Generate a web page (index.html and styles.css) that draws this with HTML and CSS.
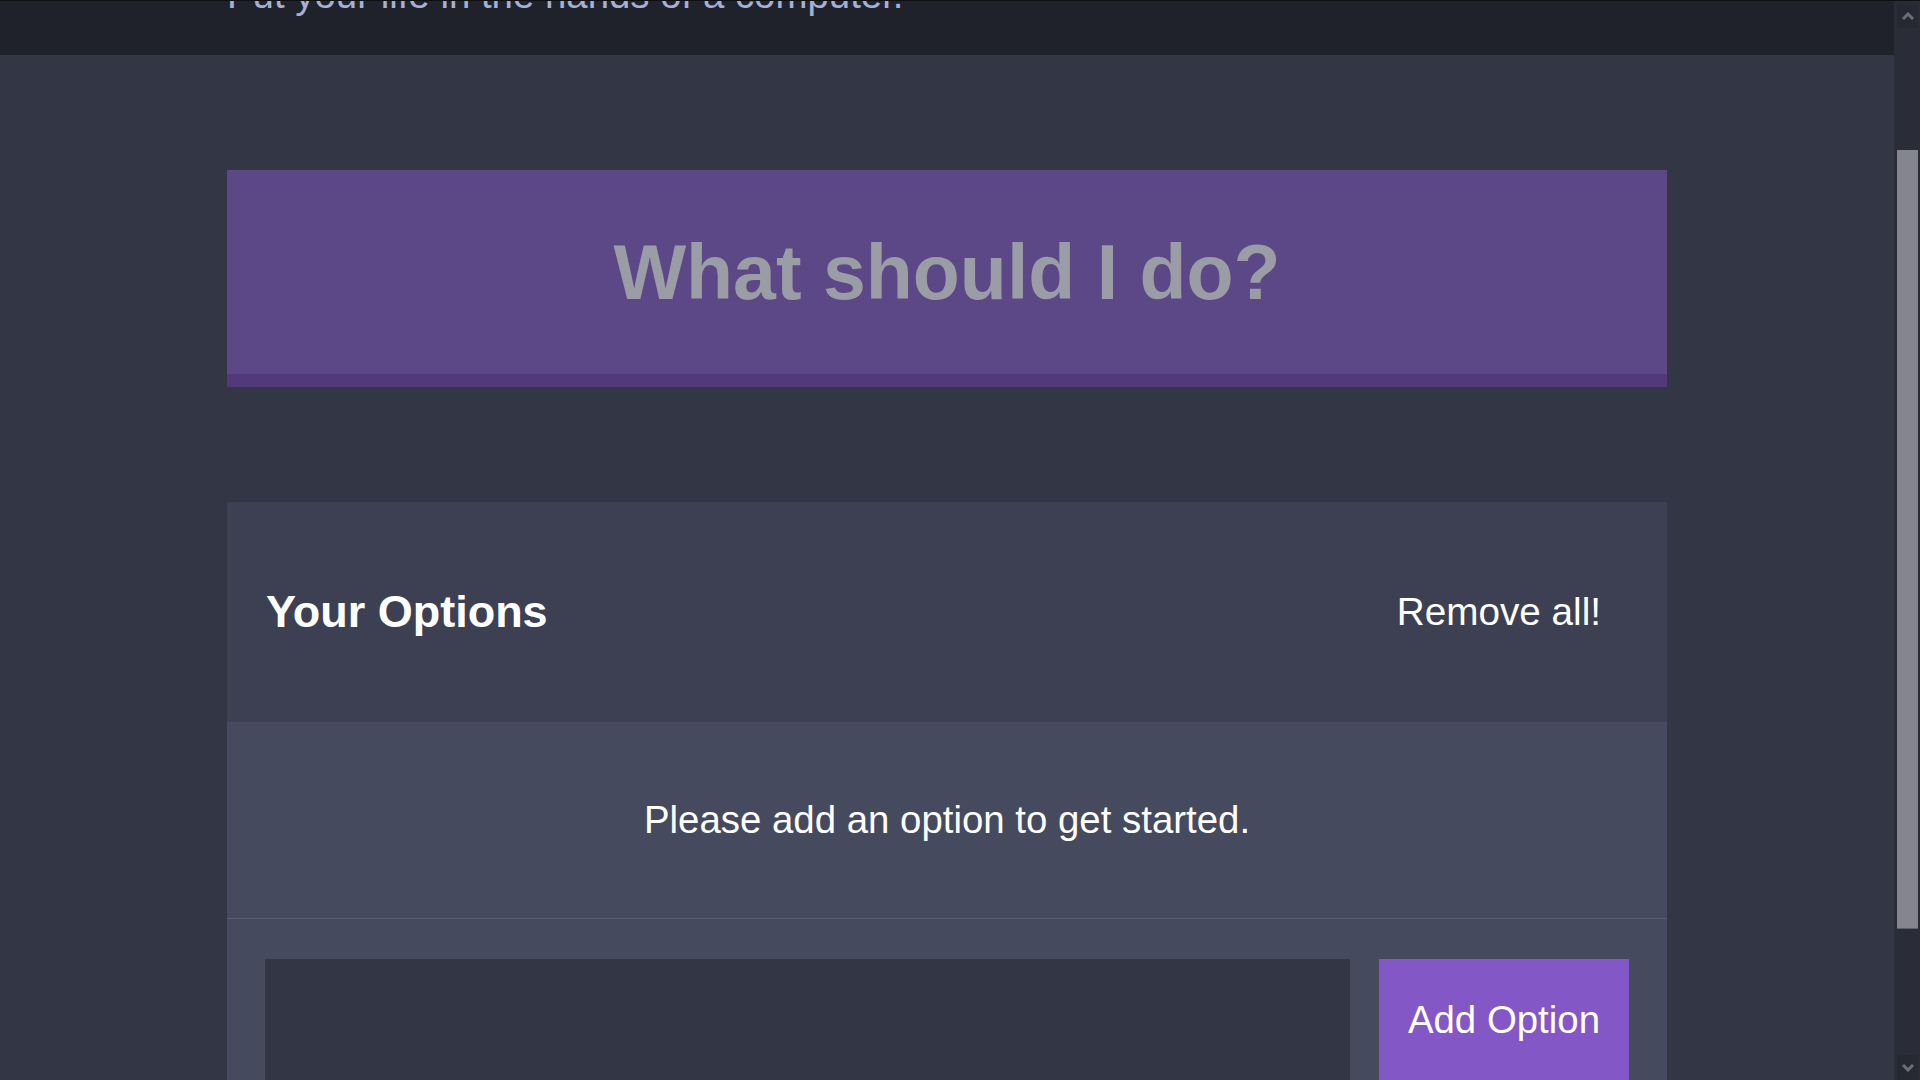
FILE: index.html
```html
<!DOCTYPE html>
<html lang="en">
<head>
<meta charset="utf-8">
<title>Indecision</title>
<link rel="stylesheet" href="styles.css">
</head>
<body>
<div class="page">
  <header class="topbar">
    <div class="container">
      <h2 class="subtitle">Put your life in the hands of a computer.</h2>
    </div>
  </header>
  <main class="container">
    <div class="big-button">
      <h1 class="big-title">What should I do?</h1>
    </div>
    <section class="widget">
      <div class="widget-header">
        <h3 class="widget-title">Your Options</h3>
        <button class="link-button">Remove all!</button>
      </div>
      <p class="widget-message">Please add an option to get started.</p>
      <form class="add-option">
        <input class="add-option-input" type="text" name="option">
        <button class="add-button" type="button">Add Option</button>
      </form>
    </section>
  </main>
</div>
<div class="scrollbar">
  <div class="sb-btn">
    <svg width="12" height="8" viewBox="0 0 12 8"><polyline points="1,7 6,2 11,7" fill="none" stroke="#6c6e7c" stroke-width="3"/></svg>
  </div>
  <div class="sb-track">
    <div class="sb-thumb"></div>
  </div>
  <div class="sb-btn">
    <svg width="12" height="8" viewBox="0 0 12 8"><polyline points="1,1 6,6 11,1" fill="none" stroke="#6c6e7c" stroke-width="3"/></svg>
  </div>
</div>
</body>
</html>
```

FILE: styles.css
```css
html, body {
  margin: 0;
  padding: 0;
  height: 100%;
}

body {
  display: flex;
  height: 100vh;
  overflow: hidden;
  border-top: 1px solid #0e0f13;
  box-sizing: border-box;
  font-family: "Liberation Sans", Arial, sans-serif;
  background: #333645;
  color: #ffffff;
}

.page {
  flex: 1;
  overflow: hidden;
  background: #333645;
}

.container {
  width: 1440px;
  margin: 0 auto;
}

.topbar {
  background: #20222b;
  height: 54px;
  overflow: hidden;
  display: flex;
  align-items: flex-end;
}

.subtitle {
  margin: 0 0 41px 0;
  font-size: 38.4px;
  font-weight: normal;
  line-height: 38px;
  color: #a6b0d4;
}

.big-button {
  margin-top: 115px;
  background: #5c4886;
  border-bottom: 13px solid #51397b;
  padding: 56px 0;
  text-align: center;
}

.big-title {
  margin: 0;
  font-size: 77px;
  line-height: 92px;
  font-weight: bold;
  color: #9a9ca6;
}

.widget {
  margin-top: 115px;
  background: #464a5e;
}

.widget-header {
  background: #3c4052;
  height: 220px;
  padding: 0 38px 0 39px;
  display: flex;
  align-items: center;
  justify-content: space-between;
}

.widget-title {
  margin: 0;
  font-size: 45px;
  font-weight: bold;
  color: #ffffff;
}

.link-button {
  background: none;
  border: none;
  color: #ffffff;
  font-family: inherit;
  font-size: 38.7px;
  padding: 0 28px;
  cursor: pointer;
}

.widget-message {
  margin: 0;
  height: 196px;
  display: flex;
  align-items: center;
  justify-content: center;
  font-size: 38.4px;
  color: #ffffff;
  border-bottom: 1px solid #585c70;
}

.add-option {
  display: flex;
  gap: 29px;
  padding: 40px 38px;
}

.add-option-input {
  flex: 1;
  background: #333645;
  border: none;
  color: #ffffff;
  font-family: inherit;
  font-size: 38px;
  outline: none;
}

.add-button {
  background: #8357c5;
  border: none;
  color: #ffffff;
  font-family: inherit;
  font-size: 38.4px;
  line-height: 1.2;
  padding: 38px 29px;
}

.scrollbar {
  width: 26px;
  flex: none;
  background: #2a2c38;
  display: flex;
  flex-direction: column;
  padding: 2px 2px 0 3px;
  box-sizing: border-box;
}

.sb-btn {
  height: 25px;
  flex: none;
  background: #262832;
  display: flex;
  align-items: center;
  justify-content: center;
}

.sb-track {
  flex: 1;
}

.sb-thumb {
  margin-top: 122px;
  height: 778px;
  background: #84858f;
  border-bottom: 1px solid #5d5f6a;
}
```
